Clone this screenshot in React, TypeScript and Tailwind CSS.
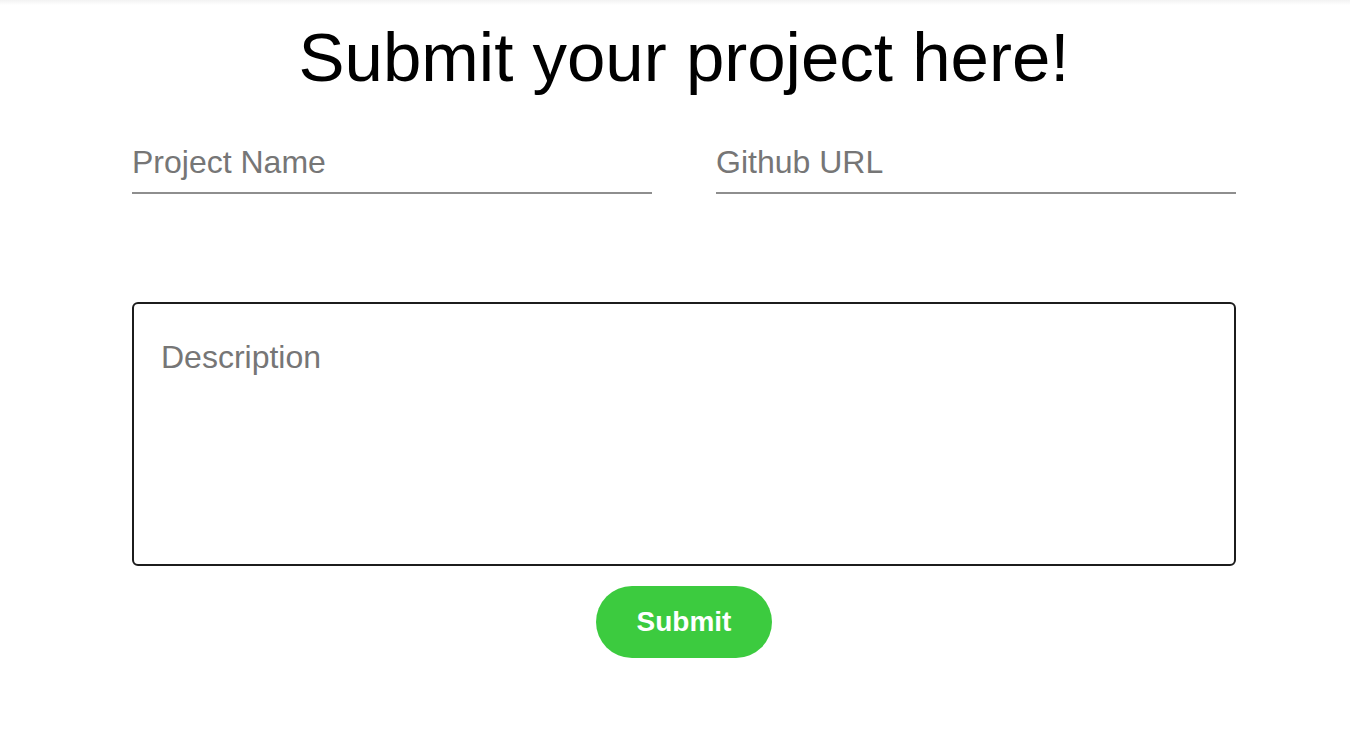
import { useState } from 'react';

export default function App() {
  const [form, setForm] = useState({ name: '', url: '', description: '' });

  const handleChange = (e: any) => {
    const { name, value } = e.target;
    setForm({ ...form, [name]: value });
  };

  return (
    <div className="min-h-screen bg-white" style={{ fontFamily: '"Liberation Sans", Arial, sans-serif' }}>
      {/* faint shade under the browser bar */}
      <div className="h-[5px] bg-gradient-to-b from-[#f2f2f2] to-white" />
      <div className="ml-[132px] w-[1104px] flex flex-col">
        <h1 className="text-center text-[69px] leading-[80px] text-black mt-[13px]">Submit your project here!</h1>

        <div className="flex gap-[64px] mt-[42px]">
          <input
            name="name"
            value={form.name}
            onChange={handleChange}
            placeholder="Project Name"
            className="w-[520px] h-[54px] pb-[8px] border-b-2 border-[#8e8e8e] bg-transparent text-[32px] outline-none placeholder:text-[#767676]"
          />
          <input
            name="url"
            value={form.url}
            onChange={handleChange}
            placeholder="Github URL"
            className="w-[520px] h-[54px] pb-[8px] border-b-2 border-[#8e8e8e] bg-transparent text-[32px] outline-none placeholder:text-[#767676]"
          />
        </div>

        <textarea
          name="description"
          value={form.description}
          onChange={handleChange}
          placeholder="Description"
          className="mt-[108px] h-[264px] w-full resize-none rounded-[6px] border-2 border-[#1c1c1c] px-[27px] pt-[35px] pb-[36px] text-[32px] leading-[36px] outline-none placeholder:text-[#767676]"
        />

        <div className="flex justify-center mt-[20px]">
          <button className="w-[176px] h-[72px] rounded-full bg-[#3ccb3f] text-white font-bold text-[28px]">
            Submit
          </button>
        </div>
      </div>
    </div>
  );
}
